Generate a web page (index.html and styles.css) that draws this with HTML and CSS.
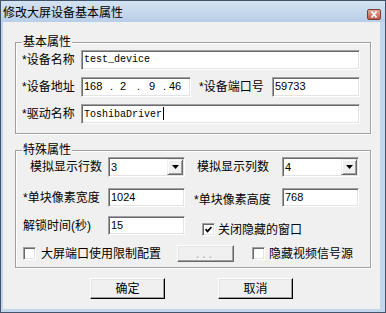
FILE: index.html
```html
<!DOCTYPE html>
<html lang="zh-CN">
	<head>
		<meta charset="UTF-8" />
		<meta name="viewport" content="width=device-width, initial-scale=1.0" />
		<title>修改大屏设备基本属性</title>
		<link rel="stylesheet" href="styles.css">
	</head>
	<body>
		<div class="window">
			<div class="titlebar">
				<span class="title">修改大屏设备基本属性</span>
				<span class="close">
					<svg width="12" height="9" viewBox="0 0 12 9"><path d="M3.5 1.5l5 6M8.5 1.5l-5 6" stroke="#fff" stroke-width="1.8" fill="none"/></svg>
				</span>
			</div>

			<div class="client">
				<div class="group basic">
					<span class="legend">基本属性</span>
					<div class="row">
						<span class="lbl w59">*设备名称</span>
						<div class="edit mono w279">test_device</div>
					</div>
					<div class="row">
						<span class="lbl w59">*设备地址</span>
						<div class="edit ip w110">
							<span class="oct">168</span><span class="dot">.</span><span class="oct">2</span><span class="dot">.</span><span class="oct">9</span><span class="dot">.</span><span class="oct">46</span>
						</div>
						<span class="lbl w73 ml8">*设备端口号</span>
						<div class="edit w88">59733</div>
					</div>
					<div class="row">
						<span class="lbl w59">*驱动名称</span>
						<div class="edit mono w279">ToshibaDriver<span class="caret"></span></div>
					</div>
				</div>

				<div class="group special">
					<span class="legend">特殊属性</span>
					<div class="row r1">
						<span class="lbl w86 pl8">模拟显示行数</span>
						<div class="combo">
							<span class="val">3</span>
							<span class="arrow"><svg width="7" height="4" viewBox="0 0 7 4"><path d="M0 0h7L3.5 4z"/></svg></span>
						</div>
						<span class="lbl w88 ml9 pl3">模拟显示列数</span>
						<div class="combo">
							<span class="val">4</span>
							<span class="arrow"><svg width="7" height="4" viewBox="0 0 7 4"><path d="M0 0h7L3.5 4z"/></svg></span>
						</div>
					</div>
					<div class="row r2">
						<span class="lbl w86 pl1">*单块像素宽度</span>
						<div class="edit w77">1024</div>
						<span class="lbl w88 ml9 low">*单块像素高度</span>
						<div class="edit w77">768</div>
					</div>
					<div class="row r3">
						<span class="lbl w86 pl1">解锁时间(秒)</span>
						<div class="edit w77">15</div>
						<label class="check drop">
							<span class="box"><svg width="7" height="7" viewBox="0 0 7 7"><path d="M0.5 3.2l2 2.2L6.5 1" stroke="#000" stroke-width="1.8" fill="none"/></svg></span>
							<span>关闭隐藏的窗口</span>
						</label>
					</div>
					<div class="row r4">
						<label class="check pl1 gap5">
							<span class="box"></span>
							<span>大屏端口使用限制配置</span>
						</label>
						<button class="btn dots" disabled>...</button>
						<label class="check ml18 gap4">
							<span class="box"></span>
							<span>隐藏视频信号源</span>
						</label>
					</div>
				</div>

				<div class="actions">
					<button class="btn">确定</button>
					<button class="btn">取消</button>
				</div>
			</div>
		</div>
	</body>
</html>
```

FILE: styles.css
```css
* {
	box-sizing: border-box;
}

body {
	margin: 0;
	font: 12px/14px "Liberation Sans", "Noto Sans CJK SC", sans-serif;
	color: #000;
}

.window {
	display: flex;
	flex-direction: column;
	width: 386px;
	height: 313px;
	border: 1px solid #44556b;
	background: #c2d6ec;
}

.titlebar {
	display: flex;
	justify-content: space-between;
	align-items: flex-end;
	height: 21px;
	padding: 0 4px 2px 2px;
	background: linear-gradient(#d4e3f3, #b8cee7);
}

.title {
	line-height: 14px;
}

.close {
	display: flex;
	justify-content: center;
	align-items: center;
	width: 14px;
	height: 11px;
	border: 1px solid #7b3b32;
	border-radius: 2px;
	background: linear-gradient(#e4a99d, #c25a48);
}

.client {
	flex: 1;
	display: flex;
	flex-direction: column;
	margin: 0 5px 3px 2px;
	padding: 20px 0 0 12px;
	background: #f0f0f0;
}

.group {
	position: relative;
	display: flex;
	flex-direction: column;
	width: 356px;
	border: 1px solid #a0a0a0;
	box-shadow: 1px 1px 0 #fff, inset 1px 1px 0 #fff;
}

.basic {
	gap: 7px;
	padding: 7px 10px 9px 6px;
}

.special {
	margin-top: 16px;
	padding: 6px 10px 5px 6px;
}

.legend {
	position: absolute;
	left: 6px;
	top: -8px;
	padding: 0 1px;
	background: #f0f0f0;
}

.row {
	display: flex;
	align-items: center;
	height: 20px;
}

.r2 {
	margin-top: 11px;
	height: 19px;
}

.r3 {
	margin-top: 9px;
	height: 19px;
}

.r4 {
	margin-top: 10px;
	height: 17px;
}

.lbl {
	flex: none;
	white-space: nowrap;
}

.w59 { width: 59px; }
.w73 { width: 73px; }
.w86 { width: 86px; }
.w88 { width: 88px; }
.w77 { width: 77px; }
.w110 { width: 110px; }
.w279 { width: 279px; }

.ml8 { margin-left: 8px; }
.ml9 { margin-left: 9px; }
.ml18 { margin-left: 18px; }
.pl1 { padding-left: 1px; }
.pl3 { padding-left: 3px; }
.pl8 { padding-left: 8px; }

.low {
	padding-top: 5px;
}

.edit {
	flex: none;
	height: 100%;
	padding: 1px 2px;
	border: 1px solid;
	border-color: #a0a0a0 #fff #fff #a0a0a0;
	box-shadow: inset 1px 1px 0 #696969, inset -1px -1px 0 #e3e3e3;
	background: #fff;
	font: 11px/14px "Liberation Sans", sans-serif;
	white-space: nowrap;
}

.mono {
	padding-top: 2px;
	font: 10px/14px "Liberation Mono", monospace;
}

.caret {
	display: inline-block;
	width: 1px;
	height: 13px;
	margin-left: 1px;
	background: #000;
	vertical-align: -3px;
}

.ip {
	display: flex;
	padding-left: 2px;
}

.ip .oct:nth-child(1) { width: 26px; }
.ip .oct:nth-child(3) { width: 24px; padding-left: 7px; }
.ip .oct:nth-child(5) { width: 23px; padding-left: 9px; }
.ip .oct:nth-child(7) { padding-left: 3px; }

.dot {
	width: 3px;
}

.combo {
	flex: none;
	display: flex;
	justify-content: space-between;
	width: 77px;
	height: 20px;
	padding: 1px;
	border: 1px solid;
	border-color: #a0a0a0 #fff #fff #a0a0a0;
	box-shadow: inset 1px 1px 0 #696969, inset -1px -1px 0 #e3e3e3;
	background: #fff;
	font: 11px/14px "Liberation Sans", sans-serif;
}

.combo .val {
	padding: 1px 0 0 1px;
}

.arrow {
	display: flex;
	justify-content: center;
	align-items: center;
	width: 16px;
	height: 16px;
	border: 1px solid;
	border-color: #f0f0f0 #696969 #696969 #f0f0f0;
	box-shadow: inset 1px 1px 0 #fff, inset -1px -1px 0 #a0a0a0;
	background: #f0f0f0;
}

.check {
	display: flex;
	align-items: center;
	gap: 3px;
	white-space: nowrap;
}

.drop {
	margin: 8px 0 0 17px;
}

.gap4 { gap: 4px; }
.gap5 { gap: 5px; }

.box {
	display: flex;
	justify-content: center;
	align-items: center;
	width: 13px;
	height: 13px;
	border: 1px solid;
	border-color: #a0a0a0 #fff #fff #a0a0a0;
	box-shadow: inset 1px 1px 0 #696969, inset -1px -1px 0 #e3e3e3;
	background: #fff;
}

.btn {
	width: 75px;
	height: 21px;
	padding: 0;
	border: 1px solid;
	border-color: #fff #000 #000 #fff;
	box-shadow: inset -1px -1px 0 #a0a0a0, inset 1px 1px 0 #e3e3e3;
	background: #f0f0f0;
	font: 12px/14px "Liberation Sans", "Noto Sans CJK SC", sans-serif;
	color: #000;
}

.dots {
	width: 57px;
	height: 17px;
	margin-left: 16px;
	border-color: #fff #696969 #696969 #fff;
	color: #a0a0a0;
	letter-spacing: 3px;
	text-shadow: 1px 1px 0 #fff;
}

.actions {
	display: flex;
	justify-content: center;
	gap: 53px;
	margin: 10px 0 0 -12px;
}
```
